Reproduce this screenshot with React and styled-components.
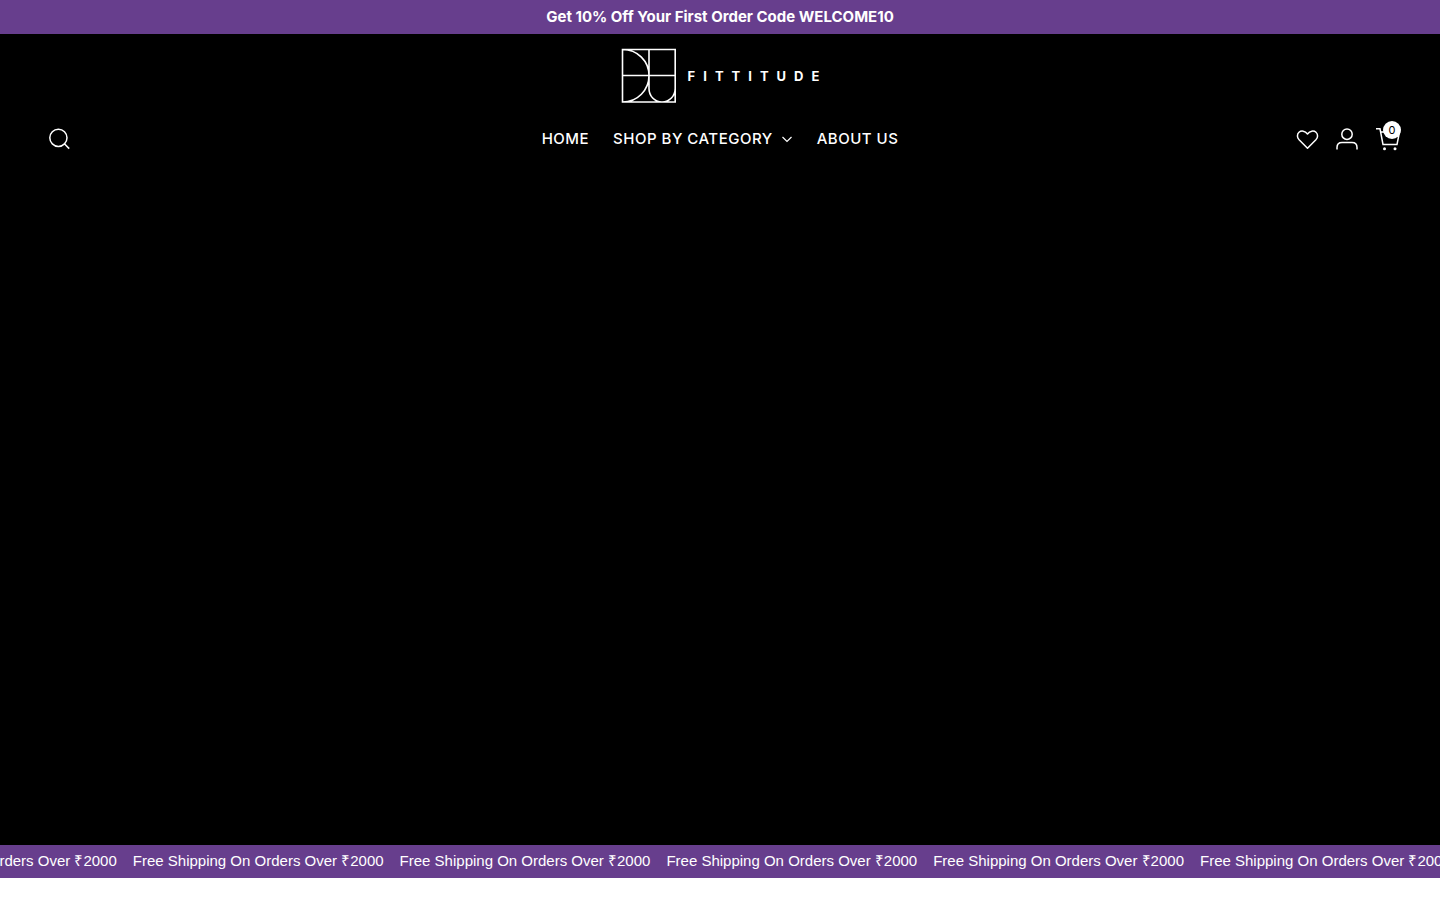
import React from 'react';
import styled, { createGlobalStyle } from 'styled-components';

const GlobalStyle = createGlobalStyle`
  * {
    box-sizing: border-box;
  }

  body {
    margin: 0;
    background: #fff;
    font-family: Inter, "Liberation Sans", sans-serif;
  }
`;

const Announcement = styled.p`
  margin: 0;
  padding: 6px 20px;
  color: #fff;
  background: #673e8d;
  font-size: 15px;
  font-weight: 700;
  line-height: 22px;
  text-align: center;
`;

const Header = styled.header`
  padding: 14px 39px 12px;
  color: #fff;
  background: #000;
`;

const Brand = styled.a`
  display: flex;
  width: fit-content;
  margin: 0 auto;
  align-items: center;
  gap: 12px;
  color: inherit;
  text-decoration: none;
`;

const BrandName = styled.span`
  font-size: 13px;
  font-weight: 700;
  line-height: 20px;
  letter-spacing: 8px;
  margin-right: -8px;
`;

const Bar = styled.div`
  display: grid;
  grid-template-columns: 1fr auto 1fr;
  align-items: center;
  height: 44px;
  margin-top: 14px;
`;

const Nav = styled.nav`
  display: flex;
  gap: 24px;
`;

const NavLink = styled.a`
  display: flex;
  align-items: center;
  gap: 8px;
  color: inherit;
  font-size: 15px;
  font-weight: 500;
  line-height: 24px;
  letter-spacing: 0.5px;
  text-decoration: none;
  text-transform: uppercase;
`;

const Tools = styled.div`
  display: flex;
  align-items: center;
  gap: 16px;
  padding-left: 9px;
  justify-content: ${props => (props.$end ? 'flex-end' : 'flex-start')};
`;

const IconButton = styled.button`
  position: relative;
  display: flex;
  padding: 0;
  border: 0;
  color: inherit;
  background: none;
  cursor: pointer;
`;

const Count = styled.span`
  position: absolute;
  top: -6px;
  right: 0;
  width: 18px;
  height: 18px;
  border-radius: 50%;
  color: #000;
  background: #fff;
  font-family: Inter, sans-serif;
  font-size: 11px;
  line-height: 18px;
  text-align: center;
`;

const Hero = styled.section`
  height: calc(100vh - 228px);
  background: #000;
`;

const Marquee = styled.div`
  overflow: hidden;
  color: #fff;
  background: #673e8d;
`;

const Track = styled.div`
  display: flex;
  width: max-content;
  padding: 5px 0 6px;
  transform: translateX(-134px);
`;

const Message = styled.span`
  padding-right: 16px;
  font-family: "Liberation Sans", Arial, sans-serif;
  font-size: 15px;
  line-height: 22px;
  white-space: nowrap;
`;

const Icon = ({ width = 24, height = 24, stroke = 1.5, children }) => (
  <svg
    width={width}
    height={height}
    viewBox={`0 0 ${width} ${height}`}
    fill="none"
    stroke="currentColor"
    strokeWidth={stroke}
    aria-hidden="true"
  >
    {children}
  </svg>
);

const messages = Array.from({ length: 6 }, () => 'Free Shipping On Orders Over ₹2000');

const App = () => (
  <>
    <GlobalStyle />
    <Announcement>Get 10% Off Your First Order Code WELCOME10</Announcement>

    <Header>
      <Brand href="#">
        <Icon width={55} height={55} stroke={1.6}>
          <path d="M1.5 1.5H54.2V54H1.5ZM1.5 27.5H54.2M1.5 1.5C16.5 1.5 28 13 28 27.5S16.5 54 1.5 54M28 1.5V40.5C28 48 33.5 54 41 54S54.2 48 54.2 40.5" />
        </Icon>
        <BrandName>FITTITUDE</BrandName>
      </Brand>

      <Bar>
        <Tools>
          <IconButton aria-label="Search">
            <Icon>
              <circle cx="10.4" cy="10.8" r="8.6" />
              <path d="M16.4 16.8L21.2 21.6" />
            </Icon>
          </IconButton>
        </Tools>

        <Nav>
          <NavLink href="#">Home</NavLink>
          <NavLink href="#">
            Shop by category
            <Icon width={12} height={8} stroke={1.2}>
              <path d="M1.5 2L6 6.5L10.5 2" />
            </Icon>
          </NavLink>
          <NavLink href="#">About us</NavLink>
        </Nav>

        <Tools $end>
          <IconButton aria-label="Wishlist">
            <Icon>
              <path
                strokeLinejoin="round"
                d="M12.5 21.2L4.1 12.8C1.9 10.5 1.9 7.2 4 5.3C6.3 3.3 10 3.8 12.5 7C15 3.8 18.7 3.3 21 5.3C23.1 7.2 23.1 10.5 20.9 12.8Z"
              />
            </Icon>
          </IconButton>
          <IconButton aria-label="Account">
            <Icon>
              <circle cx="12" cy="7.2" r="5.2" />
              <path d="M2 22.5V20.5C2 17.5 4 15.5 7 15.5H17C20 15.5 22 17.5 22 20.5V22.5" />
            </Icon>
          </IconButton>
          <IconButton aria-label="Cart">
            <Icon width={26}>
              <path d="M1 1.8H5L8 17.5H22L24.5 5H6" />
              <circle cx="9.5" cy="21.8" r="1.5" fill="currentColor" stroke="none" />
              <circle cx="20" cy="21.8" r="1.5" fill="currentColor" stroke="none" />
            </Icon>
            <Count>0</Count>
          </IconButton>
        </Tools>
      </Bar>
    </Header>

    <Hero />

    <Marquee>
      <Track>
        {messages.map((message, i) => (
          <Message key={i}>{message}</Message>
        ))}
      </Track>
    </Marquee>
  </>
);

export default App;
